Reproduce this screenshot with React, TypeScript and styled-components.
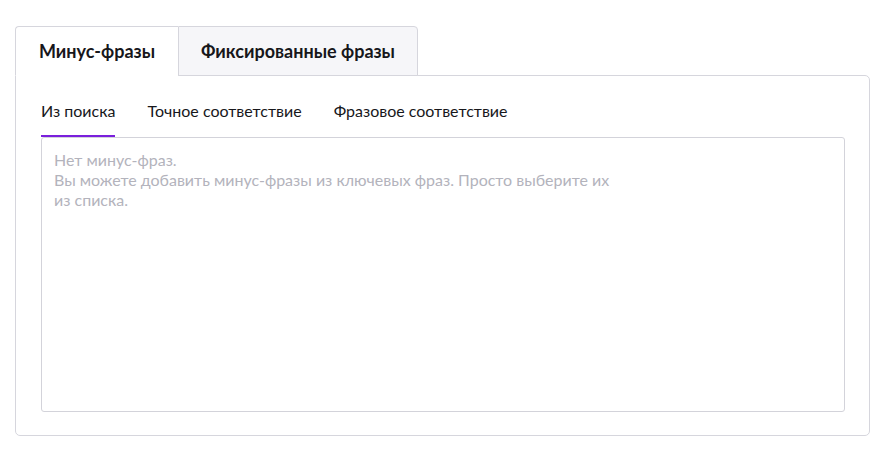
import React, { useState } from "react";
import styled, { createGlobalStyle } from "styled-components";

const GlobalStyle = createGlobalStyle`
  html, body {
    margin: 0;
    padding: 0;
    background: #ffffff;
  }
  body {
    font-family: Lato, "Noto Sans", sans-serif;
    color: #1b1b1f;
  }
`;

const Page = styled.div`
  padding: 26px 0 0 15px;
`;

const Widget = styled.div`
  width: 855px;
`;

const TabRow = styled.div`
  display: flex;
  position: relative;
  z-index: 1;
  margin-bottom: -1px;
`;

const Tab = styled.button<{ $active: boolean; $width: number }>`
  box-sizing: border-box;
  width: ${(p) => p.$width}px;
  height: 50px;
  margin: 0;
  padding: 0;
  font-family: Lato, "Noto Sans", sans-serif;
  font-size: 18px;
  font-weight: 700;
  color: #17171b;
  cursor: pointer;
  background: ${(p) => (p.$active ? "#ffffff" : "#f6f6f9")};
  border: 1px solid #d6d6dd;
  border-bottom-color: ${(p) => (p.$active ? "#ffffff" : "#d6d6dd")};
  border-right: ${(p) => (p.$active ? "none" : "1px solid #d6d6dd")};
  border-radius: ${(p) => (p.$active ? "4px 0 0 0" : "0 4px 0 0")};
  display: flex;
  align-items: center;
  justify-content: center;
  &:focus {
    outline: none;
  }
`;

const Panel = styled.div`
  box-sizing: border-box;
  height: 361px;
  border: 1px solid #d6d6dd;
  border-radius: 0 5px 5px 5px;
  padding: 0 24px 23px 25px;
  display: flex;
  flex-direction: column;
`;

const SubTabs = styled.div`
  display: flex;
  gap: 32px;
`;

const SubTab = styled.button<{ $active: boolean }>`
  margin: 0;
  padding: 25px 0 14px;
  background: none;
  border: none;
  border-bottom: 2px solid ${(p) => (p.$active ? "#7a1fdc" : "transparent")};
  font-family: Lato, "Noto Sans", sans-serif;
  font-size: 16px;
  line-height: 20px;
  color: #17171b;
  cursor: pointer;
  &:focus {
    outline: none;
  }
`;

const Field = styled.div`
  flex: 1;
  box-sizing: border-box;
  border: 1px solid #d3d3da;
  border-radius: 3px;
  padding: 12px 12px;
`;

const Placeholder = styled.div`
  font-size: 16px;
  line-height: 20px;
  color: #b3b3bc;
`;

const tabs = [
  { label: "Минус-фразы", width: 163 },
  { label: "Фиксированные фразы", width: 240 },
];

const subTabs = ["Из поиска", "Точное соответствие", "Фразовое соответствие"];

export default function App() {
  const [tab, setTab] = useState(0);
  const [sub, setSub] = useState(0);
  return (
    <Page>
      <GlobalStyle />
      <Widget>
        <TabRow>
          {tabs.map((t, i) => (
            <Tab key={t.label} $active={tab === i} $width={t.width} onClick={() => setTab(i)}>
              {t.label}
            </Tab>
          ))}
        </TabRow>
        <Panel>
          <SubTabs>
            {subTabs.map((s, i) => (
              <SubTab key={s} $active={sub === i} onClick={() => setSub(i)}>
                {s}
              </SubTab>
            ))}
          </SubTabs>
          <Field>
            <Placeholder>
              Нет минус-фраз.
              <br />
              Вы можете добавить минус-фразы из ключевых фраз. Просто выберите их
              <br />
              из списка.
            </Placeholder>
          </Field>
        </Panel>
      </Widget>
    </Page>
  );
}
